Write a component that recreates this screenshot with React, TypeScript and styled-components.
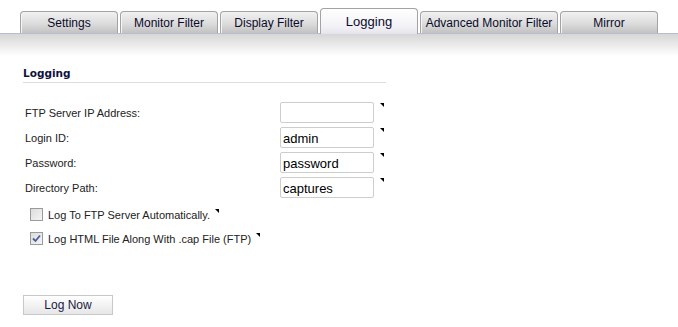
import { FC } from "react";
import styled, { createGlobalStyle } from "styled-components";

const GlobalStyle = createGlobalStyle`
  body {
    margin: 0;
    background: #ffffff;
    font-family: "Liberation Sans", Arial, sans-serif;
  }
`;

interface TabValues {
  name: string;
  width: number;
  active?: boolean;
}

const tabs: TabValues[] = [
  { name: "Settings", width: 98 },
  { name: "Monitor Filter", width: 98 },
  { name: "Display Filter", width: 98 },
  { name: "Logging", width: 98, active: true },
  { name: "Advanced Monitor Filter", width: 138 },
  { name: "Mirror", width: 98 },
];

const fields = [
  { label: "FTP Server IP Address:", value: "" },
  { label: "Login ID:", value: "admin" },
  { label: "Password:", value: "password" },
  { label: "Directory Path:", value: "captures" },
];

const Marker = styled.span`
  display: inline-block;
  width: 0;
  height: 0;
  border-top: 4px solid #000;
  border-left: 4px solid transparent;
  align-self: flex-start;
  margin-top: 1px;
  margin-left: ${({ $gap = 6 }: { $gap?: number }) => $gap}px;
`;

const CheckBox: FC<{ checked?: boolean }> = ({ checked }) => (
  <Box>
    {checked && (
      <svg width="9" height="9" viewBox="0 0 9 9">
        <path
          d="M1 4.5 L3.5 7 L8 1.5"
          fill="none"
          stroke="#4a5f9a"
          strokeWidth="1.8"
        />
      </svg>
    )}
  </Box>
);

const App: FC = () => {
  return (
    <Page>
      <GlobalStyle />
      <TabBar>
        {tabs.map((tab, k) => (
          <Tab key={k} $w={tab.width} $active={tab.active}>
            {tab.name}
          </Tab>
        ))}
      </TabBar>
      <Shade />
      <Content>
        <Section>
          <Heading>Logging</Heading>
          <Form>
            {fields.map((f, k) => (
              <Row key={k}>
                <Label>{f.label}</Label>
                <Input defaultValue={f.value} />
                <Marker />
              </Row>
            ))}
          </Form>
          <Checks>
            <CheckRow>
              <CheckBox />
              <CheckLabel>Log To FTP Server Automatically.</CheckLabel>
              <Marker $gap={5} />
            </CheckRow>
            <CheckRow>
              <CheckBox checked />
              <CheckLabel>Log HTML File Along With .cap File (FTP)</CheckLabel>
              <Marker $gap={5} />
            </CheckRow>
          </Checks>
        </Section>
        <Button>Log Now</Button>
      </Content>
    </Page>
  );
};

const Page = styled.div`
  width: 678px;
  height: 327px;
  background: #fff;
  overflow: hidden;
`;

const TabBar = styled.div`
  display: flex;
  align-items: flex-end;
  gap: 2px;
  height: 25px;
  padding: 8px 0 0 20px;
  border-bottom: 1px solid #b9bccf;
`;

const Tab = styled.div<{ $w: number; $active?: boolean }>`
  box-sizing: border-box;
  width: ${({ $w }) => $w}px;
  display: flex;
  align-items: center;
  justify-content: center;
  font-size: 12px;
  color: #0a0a2a;
  white-space: nowrap;
  border: 1px solid #a3a3a3;
  border-bottom: none;
  border-radius: 4px 4px 0 0;
  ${({ $active }) =>
    $active
      ? `
    height: 26px;
    margin-bottom: -1px;
    background: linear-gradient(#ffffff, #f2f2f6 70%, #e4e4ec);
    font-size: 13px;
  `
      : `
    height: 22px;
    background: linear-gradient(#f1f1f1, #dcdcdc 55%, #c2c2c2);
    box-shadow: inset 1px 0 0 #f6f6f6;
  `}
`;

const Shade = styled.div`
  height: 22px;
  background: linear-gradient(#d6d6d6, #ffffff);
`;

const Content = styled.div`
  padding: 10px 0 0 23px;
`;

const Section = styled.div`
  width: 363px;
`;

const Heading = styled.div`
  font-family: "DejaVu Sans", Tahoma, sans-serif;
  font-weight: bold;
  font-size: 10.5px;
  line-height: 14px;
  color: #101040;
  padding-bottom: 2px;
  border-bottom: 1px solid #dcdcdc;
`;

const Form = styled.div`
  display: flex;
  flex-direction: column;
  gap: 4px;
  margin-top: 19px;
`;

const Row = styled.div`
  display: flex;
  align-items: center;
  height: 21px;
`;

const Label = styled.span`
  width: 255px;
  padding-left: 2px;
  font-size: 11px;
  color: #222;
`;

const Input = styled.input`
  box-sizing: border-box;
  width: 94px;
  height: 21px;
  padding: 1px 2px 0;
  border: 1px solid #cdcdcd;
  border-radius: 2px;
  font-family: "Liberation Sans", Arial, sans-serif;
  font-size: 13px;
  color: #000;
  outline: none;
`;

const Checks = styled.div`
  display: flex;
  flex-direction: column;
  gap: 11px;
  margin-top: 10px;
  padding-left: 7px;
`;

const CheckRow = styled.div`
  display: flex;
  align-items: center;
  height: 13px;
`;

const Box = styled.span`
  box-sizing: border-box;
  width: 13px;
  height: 13px;
  display: flex;
  align-items: center;
  justify-content: center;
  border: 1px solid #9a9a9a;
  background: linear-gradient(135deg, #dcdcdc, #f4f4f4);
`;

const CheckLabel = styled.span`
  margin-left: 5px;
  font-size: 11px;
  color: #222;
`;

const Button = styled.button`
  display: block;
  margin-top: 50px;
  width: 90px;
  height: 20px;
  padding: 0;
  border: 1px solid #c8c8c8;
  background: linear-gradient(#ffffff, #e6e6e6);
  font-family: "Liberation Sans", Arial, sans-serif;
  font-size: 12px;
  color: #1a1a44;
`;

export default App;
